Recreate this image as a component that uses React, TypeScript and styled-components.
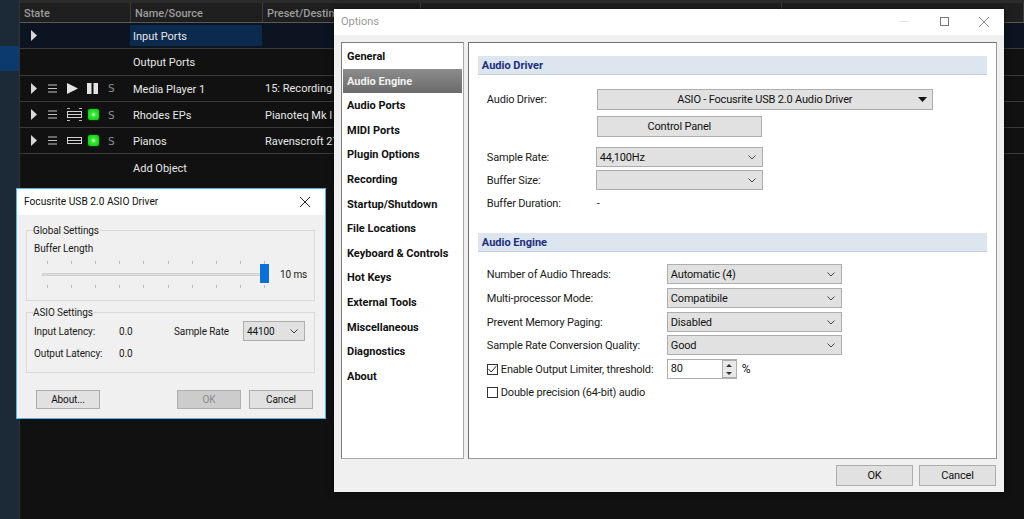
import React from 'react';
import styled, { createGlobalStyle } from 'styled-components';

const UI_FONT = 'Roboto, "Noto Sans", Arial, sans-serif';

const GlobalStyle = createGlobalStyle`
    html, body {
        margin: 0;
        padding: 0;
        background: #111111;
    }
    body {
        width: 1024px;
        height: 519px;
        overflow: hidden;
        font-family: ${UI_FONT};
        font-size: 11px;
    }
`;

const Desktop = styled.div`
    position: relative;
    display: flex;
    width: 1024px;
    height: 519px;
    overflow: hidden;
    background: #111111;
`;

const Sidebar = styled.div`
    width: 19px;
    padding-top: 46px;
    background: #1c2a38;
    border-right: 1px solid #333;
`;

const SidebarSelected = styled.div`
    height: 25px;
    background: #0d3a6e;
`;

const Main = styled.div`
    flex: 1;
`;

const TopStrip = styled.div`
    height: 3px;
    background: #2b2b2b;
`;

const HeaderRow = styled.div`
    display: flex;
    height: 19px;
    background: #1f1f1f;
    border-bottom: 1px solid #5a5a5a;
`;

const HeaderCell = styled.div<{ $width: number }>`
    width: ${(p) => p.$width}px;
    padding-left: 4px;
    box-sizing: border-box;
    border-right: 1px solid #3d3d3d;
    color: #9c9c9c;
    line-height: 21px;
    white-space: nowrap;
    font-weight: 500;
`;

const TreeRow = styled.div<{ $active?: boolean; $plain?: boolean }>`
    display: flex;
    align-items: center;
    height: 26.3px;
    box-sizing: border-box;
    background: ${(p) => (p.$active ? '#0b1420' : '#111111')};
    border-bottom: 1px solid ${(p) => (p.$plain ? 'transparent' : '#3a3a3a')};
    color: #e6e6e6;
    font-size: 11px;
`;

const StateCell = styled.div`
    display: flex;
    align-items: center;
    width: 110px;
    height: 100%;
    padding-left: 11px;
    box-sizing: border-box;
`;

const NameCell = styled.div<{ $active?: boolean }>`
    width: 132px;
    height: 21px;
    padding-left: 3px;
    box-sizing: border-box;
    line-height: 23px;
    border-radius: 2px;
    background: ${(p) => (p.$active ? '#0c2a4e' : 'transparent')};
`;

const PresetCell = styled.div`
    padding: 1px 0 0 3px;
    white-space: nowrap;
`;

const IconSlot = styled.div<{ $width: number }>`
    display: flex;
    align-items: center;
    width: ${(p) => p.$width}px;
    height: 14px;
`;

const Led = styled.div`
    width: 11px;
    height: 11px;
    border-radius: 2px;
    background: radial-gradient(circle, #eaffea 0, #35ea35 30%, #0cc20c 100%);
    box-shadow: 0 0 2px #0a8a0a;
`;

const SoloMark = styled.span`
    color: #8d8d8d;
    font-family: "DejaVu Sans", sans-serif;
    font-size: 10.5px;
`;

const Expand = () => (
    <svg width="6" height="11" viewBox="0 0 6 11">
        <path d="M0 0 L6 5.5 L0 11 Z" fill="#d8d8d8" />
    </svg>
);

const Menu = () => (
    <svg width="9" height="9" viewBox="0 0 9 9">
        <path d="M0 1 H9 M0 4.5 H9 M0 8 H9" stroke="#c4c4c4" strokeWidth="1" />
    </svg>
);

const Play = () => (
    <svg width="11" height="11" viewBox="0 0 11 11">
        <path d="M0 0 L11 5.5 L0 11 Z" fill="#e4e4e4" />
    </svg>
);

const Pause = () => (
    <svg width="11" height="11" viewBox="0 0 11 11">
        <path d="M0 0 H4.5 V11 H0 Z M6.5 0 H11 V11 H6.5 Z" fill="#e4e4e4" />
    </svg>
);

const Strip = ({ marked }: { marked?: boolean }) => (
    <svg width="15" height="13" viewBox="0 0 15 13">
        <rect x="0.5" y="3.5" width="14" height="6" fill="none" stroke="#d0d0d0" />
        <path d="M1 6.5 H14" stroke="#d0d0d0" />
        {marked && <path d="M0 0.5 H15 M0 12.5 H15" stroke="#bbbbbb" strokeDasharray="3 9" />}
    </svg>
);

const Glyph = ({ kind }: { kind: 'close' | 'max' | 'min' | 'chevron' | 'caret' | 'check' }) => {
    if (kind === 'close') {
        return (
            <svg width="10" height="10" viewBox="0 0 10 10">
                <path d="M0 0 L10 10 M10 0 L0 10" stroke="currentColor" fill="none" />
            </svg>
        );
    }
    if (kind === 'max') {
        return (
            <svg width="9" height="9" viewBox="0 0 9 9">
                <rect x="0.5" y="0.5" width="8" height="8" stroke="currentColor" fill="none" />
            </svg>
        );
    }
    if (kind === 'min') {
        return (
            <svg width="10" height="9" viewBox="0 0 10 9">
                <path d="M0 4.5 H10" stroke="#e4e4e4" fill="none" />
            </svg>
        );
    }
    if (kind === 'chevron') {
        return (
            <svg width="8" height="5" viewBox="0 0 8 5">
                <path d="M0.5 0.5 L4 4 L7.5 0.5" stroke="#444" fill="none" />
            </svg>
        );
    }
    if (kind === 'caret') {
        return (
            <svg width="9" height="5" viewBox="0 0 9 5">
                <path d="M0 0 H9 L4.5 5 Z" fill="#111" />
            </svg>
        );
    }
    return (
        <svg width="9" height="8" viewBox="0 0 9 8">
            <path d="M0.5 4 L3.2 7 L8.5 0.8" stroke="#222" fill="none" />
        </svg>
    );
};

/* windows */
const OptionsWindow = styled.div`
    position: absolute;
    left: 334px;
    top: 9px;
    width: 670px;
    height: 483px;
    display: flex;
    flex-direction: column;
    background: #f0f0f0;
    box-shadow: 0 0 6px rgba(0, 0, 0, 0.6);
    letter-spacing: -0.18px;
`;

const TitleBar = styled.div<{ $height: number }>`
    display: flex;
    align-items: center;
    height: ${(p) => p.$height}px;
    flex: none;
    padding-bottom: 1px;
    box-sizing: border-box;
    background: #ffffff;
`;

const TitleText = styled.div<{ $muted?: boolean; $size: number }>`
    flex: 1;
    padding-left: 7px;
    color: ${(p) => (p.$muted ? '#9a9a9a' : '#111111')};
    font-size: ${(p) => p.$size}px;
    letter-spacing: 0;
`;

const TitleButton = styled.div<{ $color: string }>`
    display: flex;
    justify-content: center;
    width: 40px;
    color: ${(p) => p.$color};
`;

const OptionsBody = styled.div`
    display: flex;
    gap: 4px;
    height: 417px;
    margin: 7px 7px 0;
`;

const NavList = styled.div`
    width: 123px;
    padding: 1px;
    box-sizing: border-box;
    background: #ffffff;
    border: 1px solid #7c7c7c;
    border-right-color: #a8a8a8;
    border-bottom-color: #a8a8a8;
`;

const NavItem = styled.div<{ $selected?: boolean }>`
    height: 24.6px;
    padding-left: 4px;
    color: ${(p) => (p.$selected ? '#f0f0f0' : '#111111')};
    background: ${(p) => (p.$selected ? 'linear-gradient(#8c8c8c, #6b6b6b)' : 'transparent')};
    font-weight: 700;
    font-size: 11px;
    letter-spacing: 0;
    line-height: 26px;
`;

const SettingsPanel = styled.div`
    width: 530px;
    padding: 13px 9px;
    box-sizing: border-box;
    background: #ffffff;
    border: 1px solid #6f6f6f;
    border-right-color: #9a9a9a;
    border-bottom-color: #9a9a9a;
`;

const SectionTitle = styled.div<{ $top?: number }>`
    height: 18px;
    margin-top: ${(p) => p.$top ?? 0}px;
    padding-left: 4px;
    background: #dde6ee;
    border-bottom: 1px solid #c3d0dc;
    color: #1c2f80;
    font-weight: 700;
    font-size: 11px;
    letter-spacing: 0;
    line-height: 19px;
`;

const FormRow = styled.div<{ $top: number; $label: number; $height?: number }>`
    display: grid;
    grid-template-columns: ${(p) => p.$label}px auto;
    justify-content: start;
    align-items: center;
    height: ${(p) => p.$height ?? 20}px;
    margin-top: ${(p) => p.$top}px;
    padding-left: 9px;
    color: #1a1a1a;
`;

const ControlFace = styled.div<{ $width: number; $height?: number }>`
    display: flex;
    align-items: center;
    width: ${(p) => p.$width}px;
    height: ${(p) => p.$height ?? 20}px;
    box-sizing: border-box;
    background: #e1e1e1;
    border: 1px solid #adadad;
    color: #111111;
`;

const SelectBox = styled(ControlFace)`
    justify-content: space-between;
    padding: 0 6px 0 3px;
`;

const PushButton = styled(ControlFace)<{ $disabled?: boolean }>`
    justify-content: center;
    color: ${(p) => (p.$disabled ? '#8a8a8a' : '#111111')};
    background: ${(p) => (p.$disabled ? '#cccccc' : '#e1e1e1')};
`;

const DriverButton = styled(ControlFace)`
    position: relative;
    justify-content: center;
`;

const DriverCaret = styled.span`
    position: absolute;
    right: 5px;
    top: 7px;
    line-height: 0;
`;

const CheckRow = styled.div<{ $top: number }>`
    display: flex;
    align-items: center;
    height: 20px;
    margin-top: ${(p) => p.$top}px;
    padding-left: 9px;
    color: #1a1a1a;
`;

const CheckLabel = styled.span`
    width: 166px;
    white-space: nowrap;
`;

const CheckBox = styled.span`
    display: flex;
    align-items: center;
    justify-content: center;
    width: 11px;
    height: 11px;
    margin-right: 3px;
    border: 1px solid #333;
    box-sizing: border-box;
    background: #fff;
`;

const SpinBox = styled.div`
    display: flex;
    width: 70px;
    height: 20px;
    box-sizing: border-box;
    border: 1px solid #adadad;
    border-right: none;
    color: #111;
`;

const SpinValue = styled.div`
    flex: 1;
    padding-left: 3px;
    line-height: 18px;
`;

const SpinButtons = styled.div`
    display: flex;
    flex-direction: column;
    width: 15px;
    background: #e8e8e8;
    border: 1px solid #adadad;
    box-sizing: border-box;
`;

const SpinButton = styled.div<{ $down?: boolean }>`
    flex: 1;
    display: flex;
    align-items: center;
    justify-content: center;
    &::before {
        content: '';
        border-left: 3px solid transparent;
        border-right: 3px solid transparent;
        ${(p) => (p.$down ? 'border-top: 3px solid #333;' : 'border-bottom: 3px solid #333;')}
    }
`;

const Percent = styled.span`
    margin-left: 5px;
    font-size: 12px;
`;

const Footer = styled.div<{ $gap: number; $padding: string }>`
    display: flex;
    justify-content: flex-end;
    gap: ${(p) => p.$gap}px;
    padding: ${(p) => p.$padding};
`;

const AsioWindow = styled.div`
    position: absolute;
    left: 16px;
    top: 188px;
    width: 310px;
    height: 231px;
    box-sizing: border-box;
    background: #f0f0f0;
    border: 1px solid #57b4ec;
    color: #1a1a1a;
    font-size: 10px;
    letter-spacing: -0.1px;
`;

const AsioBody = styled.div`
    padding: 15px 10px 0 9px;
`;

const GroupBox = styled.div<{ $height: number; $top?: number }>`
    position: relative;
    height: ${(p) => p.$height}px;
    margin-top: ${(p) => p.$top ?? 0}px;
    padding: 12px 7px 0;
    box-sizing: border-box;
    border: 1px solid #d9d9d9;
`;

const GroupLegend = styled.span`
    position: absolute;
    left: 6px;
    top: -7px;
    background: #f0f0f0;
    line-height: 14px;
`;

const SliderArea = styled.div`
    position: relative;
    height: 30px;
    margin-top: 7px;
    width: 270px;
`;

const TickRow = styled.div<{ $bottom?: boolean }>`
    position: absolute;
    left: 13px;
    width: 218px;
    display: flex;
    justify-content: space-between;
    ${(p) => (p.$bottom ? 'top: 24px;' : 'top: 0;')}
`;

const Tick = styled.span`
    width: 1px;
    height: 3px;
    background: #bdbdbd;
`;

const SliderTrack = styled.div`
    position: absolute;
    left: 8px;
    top: 12px;
    width: 220px;
    height: 3px;
    background: #dcdcdc;
    border: 1px solid #d2d2d2;
    box-sizing: border-box;
`;

const SliderThumb = styled.div`
    position: absolute;
    left: 226px;
    top: 3px;
    width: 9px;
    height: 19px;
    background: #0b6fd6;
`;

const SliderValue = styled.span`
    position: absolute;
    left: 246px;
    top: 8px;
    white-space: nowrap;
`;

const LatencyGrid = styled.div`
    display: grid;
    grid-template-columns: 85px 55px 69px 62px;
    grid-auto-rows: 22px;
    align-items: center;
    margin-top: -5px;
`;

const AsioFooter = styled.div`
    display: flex;
    align-items: center;
    gap: 8px;
    padding: 17px 12px 0 19px;
`;

const FooterSpacer = styled.div`
    flex: 1;
`;

const navItems = [
    'General',
    'Audio Engine',
    'Audio Ports',
    'MIDI Ports',
    'Plugin Options',
    'Recording',
    'Startup/Shutdown',
    'File Locations',
    'Keyboard & Controls',
    'Hot Keys',
    'External Tools',
    'Miscellaneous',
    'Diagnostics',
    'About',
];

const engineSelects = [
    { label: 'Number of Audio Threads:', value: 'Automatic (4)', top: 12 },
    { label: 'Multi-processor Mode:', value: 'Compatibile', top: 4 },
    { label: 'Prevent Memory Paging:', value: 'Disabled', top: 4 },
    { label: 'Sample Rate Conversion Quality:', value: 'Good', top: 3 },
];

const ticks = Array.from({ length: 10 }, (_, i) => i);

const Tools = ({ children }: { children?: React.ReactNode }) => (
    <StateCell>
        <IconSlot $width={17}><Expand /></IconSlot>
        <IconSlot $width={19}><Menu /></IconSlot>
        {children}
    </StateCell>
);

const App: React.FC = () => (
    <Desktop>
        <GlobalStyle />
        <Sidebar>
            <SidebarSelected />
        </Sidebar>
        <Main>
            <TopStrip />
            <HeaderRow>
                <HeaderCell $width={111}>State</HeaderCell>
                <HeaderCell $width={132}>Name/Source</HeaderCell>
                <HeaderCell $width={158}>Preset/Destin</HeaderCell>
                <HeaderCell $width={361} />
                <HeaderCell $width={242} />
            </HeaderRow>
            <TreeRow $active>
                <StateCell><IconSlot $width={17}><Expand /></IconSlot></StateCell>
                <NameCell $active>Input Ports</NameCell>
            </TreeRow>
            <TreeRow>
                <StateCell />
                <NameCell>Output Ports</NameCell>
            </TreeRow>
            <TreeRow>
                <Tools>
                    <IconSlot $width={20}><Play /></IconSlot>
                    <IconSlot $width={21}><Pause /></IconSlot>
                    <SoloMark>S</SoloMark>
                </Tools>
                <NameCell>Media Player 1</NameCell>
                <PresetCell>15: Recording</PresetCell>
            </TreeRow>
            <TreeRow>
                <Tools>
                    <IconSlot $width={21}><Strip marked /></IconSlot>
                    <IconSlot $width={20}><Led /></IconSlot>
                    <SoloMark>S</SoloMark>
                </Tools>
                <NameCell>Rhodes EPs</NameCell>
                <PresetCell>Pianoteq Mk I</PresetCell>
            </TreeRow>
            <TreeRow>
                <Tools>
                    <IconSlot $width={21}><Strip /></IconSlot>
                    <IconSlot $width={20}><Led /></IconSlot>
                    <SoloMark>S</SoloMark>
                </Tools>
                <NameCell>Pianos</NameCell>
                <PresetCell>Ravenscroft 27</PresetCell>
            </TreeRow>
            <TreeRow $plain>
                <StateCell />
                <NameCell>Add Object</NameCell>
            </TreeRow>
        </Main>

        <AsioWindow>
            <TitleBar $height={26}>
                <TitleText $size={10.2}>Focusrite USB 2.0 ASIO Driver</TitleText>
                <TitleButton $color="#222"><Glyph kind="close" /></TitleButton>
            </TitleBar>
            <AsioBody>
                <GroupBox $height={71}>
                    <GroupLegend>Global Settings</GroupLegend>
                    <div>Buffer Length</div>
                    <SliderArea>
                        <TickRow>{ticks.map((t) => <Tick key={t} />)}</TickRow>
                        <SliderTrack />
                        <SliderThumb />
                        <SliderValue>10 ms</SliderValue>
                        <TickRow $bottom>{ticks.map((t) => <Tick key={t} />)}</TickRow>
                    </SliderArea>
                </GroupBox>
                <GroupBox $height={61} $top={11}>
                    <GroupLegend>ASIO Settings</GroupLegend>
                    <LatencyGrid>
                        <span>Input Latency:</span>
                        <span>0.0</span>
                        <span>Sample Rate</span>
                        <SelectBox $width={62}>44100<Glyph kind="chevron" /></SelectBox>
                        <span>Output Latency:</span>
                        <span>0.0</span>
                    </LatencyGrid>
                </GroupBox>
            </AsioBody>
            <AsioFooter>
                <PushButton $width={64} $height={19}>About...</PushButton>
                <FooterSpacer />
                <PushButton $width={64} $height={19} $disabled>OK</PushButton>
                <PushButton $width={64} $height={19}>Cancel</PushButton>
            </AsioFooter>
        </AsioWindow>

        <OptionsWindow>
            <TitleBar $height={26}>
                <TitleText $muted $size={11}>Options</TitleText>
                <TitleButton $color="#e4e4e4"><Glyph kind="min" /></TitleButton>
                <TitleButton $color="#777"><Glyph kind="max" /></TitleButton>
                <TitleButton $color="#888"><Glyph kind="close" /></TitleButton>
            </TitleBar>
            <OptionsBody>
                <NavList>
                    {navItems.map((item) => (
                        <NavItem key={item} $selected={item === 'Audio Engine'}>{item}</NavItem>
                    ))}
                </NavList>
                <SettingsPanel>
                    <SectionTitle>Audio Driver</SectionTitle>
                    <FormRow $top={14} $label={110} $height={21}>
                        <span>Audio Driver:</span>
                        <DriverButton $width={336} $height={21}>
                            ASIO - Focusrite USB 2.0 Audio Driver
                            <DriverCaret><Glyph kind="caret" /></DriverCaret>
                        </DriverButton>
                    </FormRow>
                    <FormRow $top={6} $label={110} $height={21}>
                        <span />
                        <PushButton $width={165} $height={21}>Control Panel</PushButton>
                    </FormRow>
                    <FormRow $top={10} $label={109}>
                        <span>Sample Rate:</span>
                        <SelectBox $width={167}>44,100Hz<Glyph kind="chevron" /></SelectBox>
                    </FormRow>
                    <FormRow $top={3} $label={109}>
                        <span>Buffer Size:</span>
                        <SelectBox $width={167}><span /><Glyph kind="chevron" /></SelectBox>
                    </FormRow>
                    <FormRow $top={3} $label={110}>
                        <span>Buffer Duration:</span>
                        <span>-</span>
                    </FormRow>
                    <SectionTitle $top={20}>Audio Engine</SectionTitle>
                    {engineSelects.map((row) => (
                        <FormRow key={row.label} $top={row.top} $label={180}>
                            <span>{row.label}</span>
                            <SelectBox $width={175}>{row.value}<Glyph kind="chevron" /></SelectBox>
                        </FormRow>
                    ))}
                    <CheckRow $top={4}>
                        <CheckBox><Glyph kind="check" /></CheckBox>
                        <CheckLabel>Enable Output Limiter, threshold:</CheckLabel>
                        <SpinBox>
                            <SpinValue>80</SpinValue>
                            <SpinButtons>
                                <SpinButton />
                                <SpinButton $down />
                            </SpinButtons>
                        </SpinBox>
                        <Percent>%</Percent>
                    </CheckRow>
                    <CheckRow $top={3}>
                        <CheckBox />
                        <span>Double precision (64-bit) audio</span>
                    </CheckRow>
                </SettingsPanel>
            </OptionsBody>
            <Footer $gap={6} $padding="6px 8px 0 0">
                <PushButton $width={77} $height={21}>OK</PushButton>
                <PushButton $width={77} $height={21}>Cancel</PushButton>
            </Footer>
        </OptionsWindow>
    </Desktop>
);

export default App;
